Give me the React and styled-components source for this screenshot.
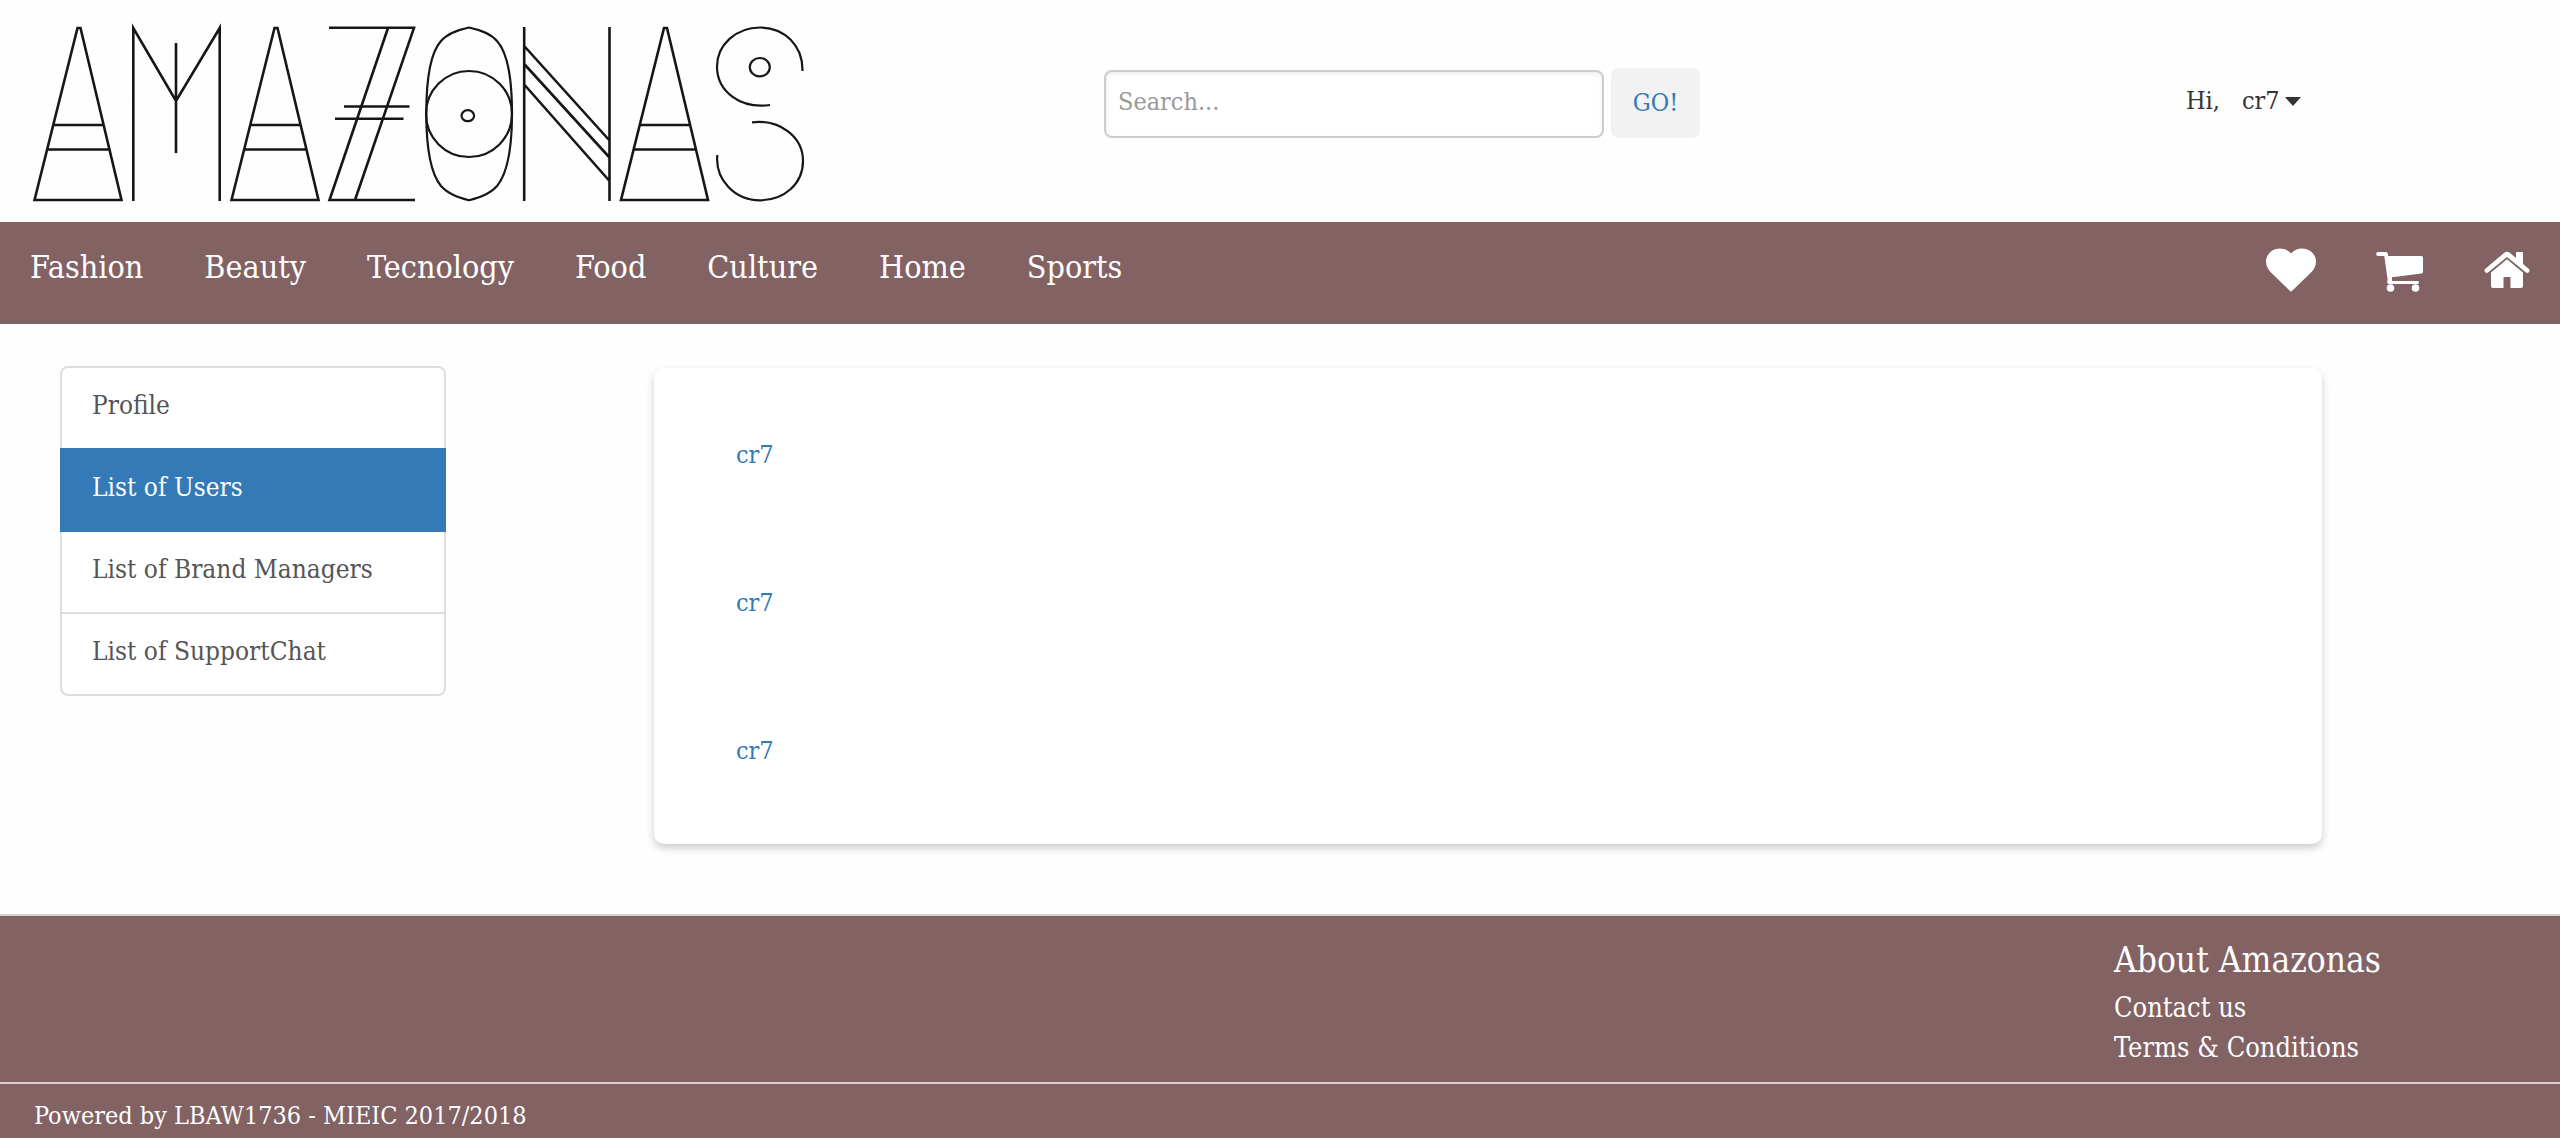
import React from "react";
import styled, { createGlobalStyle, css } from "styled-components";

const mauve = "#826263";
const blue = "#337ab7";

const GlobalStyle = createGlobalStyle`
  *, *::before, *::after { box-sizing: border-box; }
  body {
    margin: 0;
    background: #fefefe;
    color: #333;
    font-family: "DejaVu Serif Condensed", "DejaVu Serif", serif;
    font-size: 26px;
    line-height: 40px;
  }
  a { color: inherit; text-decoration: none; }
  button, input { font: inherit; }
  ul { list-style: none; margin: 0; padding: 0; }
`;

const Page = styled.div`
  display: flex;
  flex-direction: column;
  min-height: 100vh;
`;

const Header = styled.header`
  display: grid;
  grid-template-columns: 1104fr 1082fr 374fr;
  padding: 20px 0 14px;
  font-size: 25px;
`;

const LogoLink = styled.a`
  display: block;
  padding-left: 28px;
  svg { display: block; }
`;

const SearchForm = styled.form`
  display: flex;
  align-items: flex-end;
  gap: 7px;
  align-self: start;
  padding-top: 48px;
`;

const SearchInput = styled.input`
  width: 500px;
  height: 68px;
  padding: 0 12px 6px;
  color: #555;
  background: #fff;
  border: 2px solid #ccc;
  border-radius: 8px;
  box-shadow: inset 0 2px 4px rgba(0, 0, 0, 0.08);
  &::placeholder { color: #999; opacity: 1; }
`;

const GoButton = styled.button`
  width: 89px;
  height: 70px;
  padding: 0;
  color: ${blue};
  background: #f2f2f2;
  border: 0;
  border-radius: 8px;
`;

const UserMenu = styled.div`
  display: flex;
  gap: 22px;
  padding-top: 61px;
`;

const UserButton = styled.button`
  display: flex;
  align-items: center;
  gap: 5px;
  align-self: start;
  padding: 0;
  color: inherit;
  background: none;
  border: 0;
`;

const Caret = styled.span`
  border-top: 9px solid #333;
  border-left: 8px solid transparent;
  border-right: 8px solid transparent;
`;

const NavBar = styled.nav`
  display: flex;
  justify-content: space-between;
  height: 102px;
  padding: 25px 30px 0;
  color: #fff;
  background: ${mauve};
`;

const NavList = styled.ul`
  display: flex;
  gap: 61px;
  font-size: 32px;
`;

const IconList = styled.ul`
  display: flex;
  gap: 60px;
  padding-top: 1px;
  svg { display: block; }
`;

const Main = styled.main`
  display: grid;
  grid-template-columns: 654fr 1668fr 238fr;
  flex: 1;
  align-items: start;
  padding: 42px 0 70px;
`;

const Sidebar = styled.nav`
  width: 446px;
  padding-left: 60px;
`;

const SideLink = styled.a`
  display: block;
  height: 84px;
  margin-bottom: -2px;
  padding: 17px 30px;
  color: #555;
  background: #fff;
  border: 2px solid #ddd;
  li:first-child > & { border-radius: 8px 8px 0 0; }
  li:last-child > & { border-radius: 0 0 8px 8px; margin-bottom: 0; }
  ${({ $active }) => $active && css`
    position: relative;
    color: #fff;
    background: ${blue};
    border-color: ${blue};
  `}
`;

const Card = styled.section`
  margin-top: 2px;
  padding: 62px 82px 68px;
  background: #fff;
  border-radius: 10px;
  box-shadow: 0 4px 8px rgba(0, 0, 0, 0.2);
`;

const UserList = styled.ul`
  display: flex;
  flex-direction: column;
  gap: 98px;
  color: ${blue};
  font-size: 25px;
  line-height: 50px;
`;

const Footer = styled.footer`
  color: #fff;
  background: ${mauve};
  border-top: 2px solid #d9d1d0;
`;

const FooterTop = styled.div`
  display: grid;
  grid-template-columns: 2114fr 446fr;
  padding: 28px 0 14px;
`;

const About = styled.section`
  grid-column: 2;
  font-size: 27px;
`;

const AboutTitle = styled.h2`
  margin: 0;
  padding-bottom: 12px;
  font-size: 35px;
  font-weight: 400;
  line-height: 32px;
`;

const FooterBottom = styled.p`
  margin: 0;
  padding: 12px 34px 2px;
  font-size: 25px;
  border-top: 2px solid #d9d1d0;
`;

const LetterA = ({ x }) => (
  <path d={`M${x} 200 L${x + 43} 28 H${x + 46} L${x + 87} 200 Z M${x + 19} 125 H${x + 68} M${x + 13} 149.5 H${x + 74}`} />
);

const Logo = () => (
  <svg width="788" height="188" viewBox="28 20 788 188" fill="none" stroke="#161616" strokeWidth="2.6" role="img" aria-label="Amazonas">
    <LetterA x={34.5} />
    <path d="M133.3 201 V28 L176 101 L219.7 28 V201 M176 43 V153" />
    <LetterA x={231.5} />
    <path d="M329 27.8 H414 L355 200 M388 28 L329.5 200 H415 M344 106.5 H409.500 M335 118.800 H403.500" />
    <g strokeWidth="2.2">
      <path d="M469 27.500 C480 30 490 33 497 41 C507 52 512 78 512 113.500 C512 149 507 174 497 186 C490 194 480 197 469 200.300 C458 197 448 194 441 186 C431 174 426.300 149 426.300 113.500 C426.300 78 431 52 441 41 C448 33 458 30 469 27.500 Z" />
      <circle cx="469" cy="114" r="43" />
      <ellipse cx="467.800" cy="115.700" rx="6.300" ry="5.500" />
    </g>
    <path d="M524.200 27 V201 M609.500 27 V201 M524.200 46 L609.500 140.500 M524.200 64 L609.500 157.500 M524.200 84.500 L609.500 181" />
    <LetterA x={621} />
    <g strokeWidth="2.2">
      <path d="M802.500 71 C803 45 784 27.500 760 27.500 C736 27.500 717 45 717 66.500 C717 92 741 109 770 105" />
      <ellipse cx="759.800" cy="67.200" rx="10" ry="9.200" />
      <path d="M752 122.300 C780 119 803 137 803 161 C803 184 784 200.300 760 200.300 C735 200.300 715 180 717.300 155" />
    </g>
  </svg>
);

const HeartIcon = () => (
  <svg width="50" height="44" viewBox="0 0 50 44" fill="#fff" aria-hidden="true">
    <path d="M25 5.500 C22 2 18 .5 14 .5 C6 .5 0 6.500 0 13.500 C0 18 2 21.500 5 24.500 L23.800 42.800 Q25 44 26.200 42.800 L45 24.500 C48 21.500 50 18 50 13.500 C50 6.500 44 .5 36 .5 C32 .5 28 2 25 5.500 Z" />
  </svg>
);

const CartIcon = () => (
  <svg width="48" height="44" viewBox="0 0 48 44" fill="#fff" aria-hidden="true">
    <path d="M2 4 H10 Q11.500 4 11.700 5.500 L12.200 8 H45.500 Q47 8 47 9.500 V24 Q47 25.300 45.500 25.500 L16 29.200 V33 H41.500 Q43 33 43 34.500 Q43 36 41.500 36 H13 Q11 36 11.200 34 L11.600 31.500 L8.300 8 H2 Q.2 8 .2 6 Q.2 4 2 4 Z" />
    <circle cx="14.500" cy="40" r="3.800" />
    <circle cx="39.500" cy="40" r="3.800" />
  </svg>
);

const HouseIcon = () => (
  <svg width="46" height="44" viewBox="0 0 46 44" fill="#fff" aria-hidden="true">
    <path d="M1 21 L20 5 Q23 2.500 26 5 L32 10 V5 Q32 4 33 4 H38 Q39 4 39 5 V16 L45 21 Q46 22.500 45 24 Q43.500 25.500 42 24.500 L23 9 L4 24.500 Q2.500 25.500 1 24 Q0 22.500 1 21 Z" />
    <path d="M7 24.500 L23 11.300 L39 24.500 V38 Q39 40 37 40 H26.500 V29 H19.500 V40 H9 Q7 40 7 38 Z" />
  </svg>
);

const categories = ["Fashion", "Beauty", "Tecnology", "Food", "Culture", "Home", "Sports"];
const shortcuts = [
  { label: "Favourites", Icon: HeartIcon },
  { label: "Cart", Icon: CartIcon },
  { label: "Home page", Icon: HouseIcon },
];
const sections = ["Profile", "List of Users", "List of Brand Managers", "List of SupportChat"];
const users = ["cr7", "cr7", "cr7"];

export default function App() {
  return (
    <Page>
      <GlobalStyle />
      <Header>
        <LogoLink href="#"><Logo /></LogoLink>
        <SearchForm onSubmit={(e) => e.preventDefault()}>
          <SearchInput type="text" placeholder="Search..." aria-label="Search" />
          <GoButton type="submit">GO!</GoButton>
        </SearchForm>
        <UserMenu>
          <span>Hi,</span>
          <UserButton type="button" aria-haspopup="menu">cr7<Caret /></UserButton>
        </UserMenu>
      </Header>
      <NavBar>
        <NavList>
          {categories.map((name) => <li key={name}><a href="#">{name}</a></li>)}
        </NavList>
        <IconList>
          {shortcuts.map(({ label, Icon }) => (
            <li key={label}><a href="#" aria-label={label}><Icon /></a></li>
          ))}
        </IconList>
      </NavBar>
      <Main>
        <Sidebar>
          <ul>
            {sections.map((name) => (
              <li key={name}>
                <SideLink href="#" $active={name === "List of Users"}>{name}</SideLink>
              </li>
            ))}
          </ul>
        </Sidebar>
        <Card>
          <UserList>
            {users.map((name, i) => <li key={i}><a href="#">{name}</a></li>)}
          </UserList>
        </Card>
      </Main>
      <Footer>
        <FooterTop>
          <About>
            <AboutTitle>About Amazonas</AboutTitle>
            <ul>
              <li><a href="#">Contact us</a></li>
              <li><a href="#">Terms &amp; Conditions</a></li>
            </ul>
          </About>
        </FooterTop>
        <FooterBottom>Powered by LBAW1736 - MIEIC 2017/2018</FooterBottom>
      </Footer>
    </Page>
  );
}
